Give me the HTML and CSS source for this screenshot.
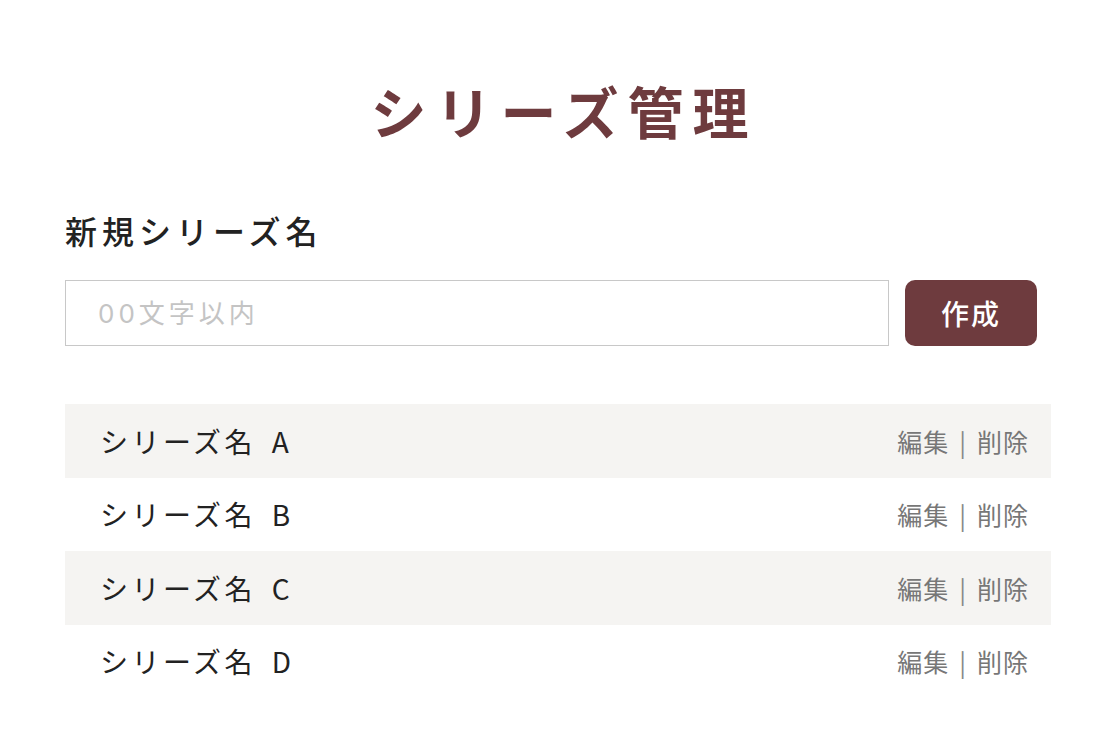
FILE: index.html
```html
<!DOCTYPE html>
<html lang="ja">
<head>
    <meta charset="UTF-8">
    <title>シリーズ管理</title>
    <link rel="stylesheet" href="styles.css">
</head>
<body>
    <div class="page">
        <h1 class="title">シリーズ管理</h1>

        <div class="new-series">
            <label class="label" for="seriesName">新規シリーズ名</label>
            <div class="form-row">
                <input type="text" id="seriesName" class="name-input" placeholder="00文字以内">
                <button class="create-btn">作成</button>
            </div>
        </div>

        <ul class="series-list">
            <li class="series-item">
                <span class="series-name">シリーズ名 A</span>
                <span class="actions">編集<span class="sep">|</span>削除</span>
            </li>
            <li class="series-item">
                <span class="series-name">シリーズ名 B</span>
                <span class="actions">編集<span class="sep">|</span>削除</span>
            </li>
            <li class="series-item">
                <span class="series-name">シリーズ名 C</span>
                <span class="actions">編集<span class="sep">|</span>削除</span>
            </li>
            <li class="series-item">
                <span class="series-name">シリーズ名 D</span>
                <span class="actions">編集<span class="sep">|</span>削除</span>
            </li>
        </ul>
    </div>
</body>
</html>
```

FILE: styles.css
```css
/* Base */
body {
    margin: 0;
    background: #ffffff;
    font-family: "Noto Sans CJK JP", "Noto Sans", sans-serif;
    color: #222222;
}

.page {
    padding: 0 65px;
}

/* Title */
.title {
    margin: 0;
    padding-top: 68px;
    padding-left: 12px; /* balances the trailing letter-spacing */
    text-align: center;
    font-size: 56px;
    font-weight: 700;
    letter-spacing: 9px;
    line-height: 84px;
    color: #6e3b3e;
}

/* New series form */
.new-series {
    margin-top: 58px;
}

.label {
    display: block;
    font-size: 32px;
    font-weight: 500;
    letter-spacing: 5px;
    line-height: 40px;
    color: #222222;
}

.form-row {
    display: flex;
    gap: 16px;
    margin-top: 30px;
    margin-right: 14px;
}

.name-input {
    flex: 1;
    height: 66px;
    box-sizing: border-box;
    border: 1px solid #c8c8c8;
    padding: 0 32px;
    font-family: "Inter", "Noto Sans CJK JP", sans-serif;
    font-size: 26px;
    color: #222222;
    outline: none;
}

.name-input::placeholder {
    color: #c4c4c4;
    letter-spacing: 4px;
}

.create-btn {
    width: 132px;
    height: 66px;
    border: none;
    border-radius: 10px;
    background: #6e3b3e;
    color: #ffffff;
    font-family: inherit;
    font-size: 28px;
    font-weight: 500;
    letter-spacing: 2px;
    cursor: pointer;
}

/* Series list */
.series-list {
    list-style: none;
    margin: 58px 0 0;
    padding: 0;
}

.series-item {
    display: flex;
    align-items: center;
    justify-content: space-between;
    height: 73.5px;
    padding: 0 22px 0 35px;
}

.series-item:nth-child(odd) {
    background: #f5f4f2;
}

.series-name {
    font-size: 28px;
    letter-spacing: 3.5px;
    word-spacing: 6px;
    color: #222222;
}

.actions {
    font-size: 25px;
    color: #777777;
    letter-spacing: 1px;
}

.sep {
    margin: 0 10px;
    color: #888888;
}
```
